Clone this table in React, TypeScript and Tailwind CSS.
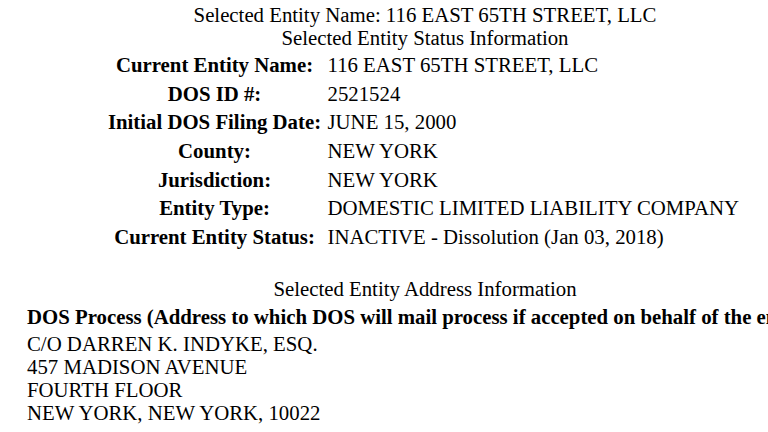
const rows = [
  ["Current Entity Name:", "116 EAST 65TH STREET, LLC"],
  ["DOS ID #:", "2521524"],
  ["Initial DOS Filing Date:", "JUNE 15, 2000"],
  ["County:", "NEW YORK"],
  ["Jurisdiction:", "NEW YORK"],
  ["Entity Type:", "DOMESTIC LIMITED LIABILITY COMPANY"],
  ["Current Entity Status:", "INACTIVE - Dissolution (Jan 03, 2018)"],
];

const address = [
  "C/O DARREN K. INDYKE, ESQ.",
  "457 MADISON AVENUE",
  "FOURTH FLOOR",
  "NEW YORK, NEW YORK, 10022",
];

export default function App() {
  return (
    <div className="w-[768px] h-[432px] overflow-hidden bg-white">
      <div className="w-[850px] pt-[3px] text-black font-['Liberation_Serif','Times_New_Roman',serif] text-[20.8px] leading-[23px]">
        {/* Entity heading */}
        <p className="text-center">Selected Entity Name: 116 EAST 65TH STREET, LLC</p>
        <p className="text-center">Selected Entity Status Information</p>

        {/* Status table */}
        <div className="mx-auto mt-[1px] grid w-fit grid-cols-[220px_421px]">
          {rows.map(([label, value]) => (
            <div key={label} className="contents">
              <div className="flex h-[28.7px] items-center justify-center font-bold">
                {label}
              </div>
              <div className="flex h-[28.7px] items-center pl-[3px]">{value}</div>
            </div>
          ))}
        </div>

        {/* Address section */}
        <p className="mt-[26px] text-center">Selected Entity Address Information</p>
        <p className="mt-[5px] whitespace-nowrap pl-[27px] font-bold">
          DOS Process (Address to which DOS will mail process if accepted on behalf of the entity)
        </p>
        <div className="mt-[4px] pl-[27px]">
          {address.map((line) => (
            <p key={line}>{line}</p>
          ))}
        </div>
      </div>
    </div>
  );
}
